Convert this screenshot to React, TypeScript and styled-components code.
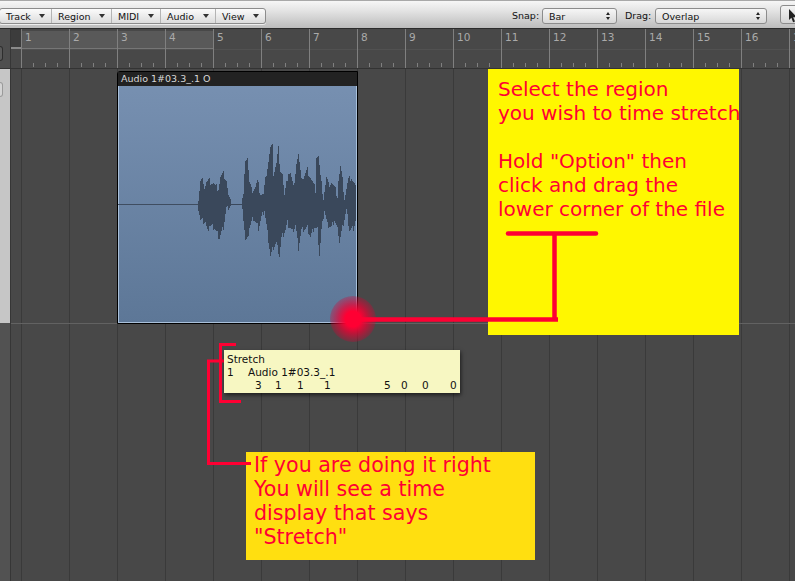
import styled, { createGlobalStyle } from "styled-components";

const GlobalStyle = createGlobalStyle`
  html, body {
    margin: 0;
    padding: 0;
    background: #484848;
  }
`;

const Page = styled.div`
  position: relative;
  width: 795px;
  height: 581px;
  overflow: hidden;
  font-family: "DejaVu Sans", sans-serif;
`;

const Toolbar = styled.div`
  box-sizing: border-box;
  height: 29px;
  padding-top: 8px;
  display: flex;
  align-items: flex-start;
  border-top: 1px solid #a8a8a8;
  border-bottom: 1px solid #2c2c2c;
  background: linear-gradient(#f6f6f6 0%, #e4e4e4 35%, #bcbcbc 100%);
`;

const MenuGroup = styled.div`
  display: flex;
  flex: none;
  height: 14px;
  margin-left: -1px;
  margin-top: -1px;
  border: 1px solid #8c8c8c;
  border-radius: 3px;
  background: linear-gradient(#fbfbfb, #dcdcdc);
  box-shadow: 0 1px 0 #eeeeee;
`;

const MenuItem = styled.div<{ $w: number }>`
  box-sizing: border-box;
  width: ${(p) => p.$w}px;
  padding: 0 6px 0 6px;
  display: flex;
  align-items: center;
  justify-content: space-between;
  font-size: 9.5px;
  color: #111;
  border-right: 1px solid #b4b4b4;
  &:last-child {
    border-right: none;
  }
`;

const DownCaret = styled.span`
  width: 0;
  height: 0;
  border-left: 3px solid transparent;
  border-right: 3px solid transparent;
  border-top: 4px solid #333;
`;

const SnapLabel = styled.span<{ $left: number }>`
  flex: none;
  width: 26px;
  margin-left: ${(p) => p.$left}px;
  font-size: 9.5px;
  line-height: 16px;
  margin-top: -1px;
  color: #111;
`;

const SelectBox = styled.div<{ $w: number }>`
  box-sizing: border-box;
  flex: none;
  width: ${(p) => p.$w}px;
  height: 16px;
  margin-top: -1px;
  margin-left: 4px;
  padding: 0 6px;
  display: flex;
  align-items: center;
  justify-content: space-between;
  font-size: 9.5px;
  color: #111;
  border: 1px solid #8c8c8c;
  border-radius: 3px;
  background: linear-gradient(#f6f6f6, #d8d8d8);
`;

const Stepper = styled.span`
  display: flex;
  flex-direction: column;
  gap: 2px;
  &::before {
    content: "";
    border-left: 2px solid transparent;
    border-right: 2px solid transparent;
    border-bottom: 3px solid #222;
  }
  &::after {
    content: "";
    border-left: 2px solid transparent;
    border-right: 2px solid transparent;
    border-top: 3px solid #222;
  }
`;

const ToolButton = styled.div`
  box-sizing: border-box;
  flex: none;
  width: 30px;
  height: 19px;
  margin-left: 13px;
  margin-top: -4px;
  padding: 2px 0 0 7px;
  border: 1px solid #8c8c8c;
  border-radius: 3px;
  background: linear-gradient(#f4f4f4, #d4d4d4);
`;

const RulerRow = styled.div`
  display: flex;
  height: 39px;
  background: #484848;
  border-bottom: 1px solid #333;
`;

const LeftStrip = styled.div`
  box-sizing: border-box;
  width: 11px;
  flex: none;
  padding-top: 17px;
  background: #4e4e4e;
  border-right: 1px solid #363636;
`;

const StripButton = styled.div<{ $light?: boolean }>`
  box-sizing: border-box;
  width: 3px;
  height: 15px;
  border: 1px solid ${(p) => (p.$light ? "#9a9a9a" : "#2e2e2e")};
  border-left: none;
  border-radius: 0 3px 3px 0;
  background: ${(p) => (p.$light ? "#d4d4d4" : "#5a5a5a")};
`;

const RulerCorner = styled.div`
  box-sizing: border-box;
  width: 10px;
  height: 20px;
  margin-top: 0;
  flex: none;
  background: #3c3c3c;
  border-top: 1px solid #333;
  border-bottom: 2px solid #8a8a8a;
`;

const RulerBars = styled.div`
  position: relative;
  display: flex;
  flex: 1;
`;

const CycleRegion = styled.div`
  position: absolute;
  left: 0;
  top: 2px;
  width: 192px;
  height: 17px;
  background: #595959;
  border-bottom: 1px solid #767676;
  border-right: 1px solid #8c8c8c;
`;

const MidLine = styled.div`
  position: absolute;
  left: 0;
  right: 0;
  top: 20px;
  height: 1px;
  background: #515151;
`;

const Bar = styled.div`
  position: relative;
  box-sizing: border-box;
  width: 48px;
  flex: none;
  padding: 1px 0 0 3px;
  font-size: 10.5px;
  line-height: 14px;
  color: #aaaaaa;
  border-left: 1px solid #808080;
  height: 39px;
  background:
    linear-gradient(#808080, #808080) 11px 34px / 1px 4px no-repeat,
    linear-gradient(#808080, #808080) 23px 34px / 1px 4px no-repeat,
    linear-gradient(#808080, #808080) 35px 34px / 1px 4px no-repeat;
`;

const Arrange = styled.div`
  position: relative;
  display: flex;
  height: 512px;
`;

const Tracks = styled.div`
  flex: 1;
  display: flex;
  flex-direction: column;
`;

const TrackLane = styled.div<{ $h: number }>`
  height: ${(p) => p.$h}px;
  flex: none;
  background-color: #484848;
  background-image: repeating-linear-gradient(
    90deg,
    #3a3a3a 0,
    #3a3a3a 1px,
    transparent 1px,
    transparent 48px
  );
  background-position: 10px 0;
`;

const LaneDivider = styled.div`
  height: 1px;
  flex: none;
  background: #626262;
`;

const StripColumn = styled.div`
  width: 11px;
  flex: none;
  display: flex;
  flex-direction: column;
`;

const StripPart = styled.div<{ $h: number; $bg: string }>`
  box-sizing: border-box;
  height: ${(p) => p.$h}px;
  flex: none;
  padding-top: 13px;
  background: ${(p) => p.$bg};
  border-right: 1px solid #363636;
`;

const Region = styled.div`
  position: absolute;
  left: 117px;
  top: 2px;
  box-sizing: border-box;
  width: 241px;
  height: 253px;
  border: 1px solid #000;
  border-top-left-radius: 3px;
  box-shadow: inset 0 0 0 1px #a9c0da;
  background: linear-gradient(#7891b2, #5d7797);
  display: flex;
  flex-direction: column;
`;

const RegionHeader = styled.div`
  height: 14px;
  flex: none;
  padding-left: 3px;
  background: #222;
  color: #d8d8d8;
  font-size: 9.5px;
  line-height: 14px;
`;

const Wave = styled.svg`
  display: block;
  flex: 1;
`;

const Sticky = styled.div<{
  $left: number;
  $top: number;
  $w: number;
  $h: number;
  $bg: string;
  $pad: string;
  $size: number;
}>`
  position: absolute;
  left: ${(p) => p.$left}px;
  top: ${(p) => p.$top}px;
  width: ${(p) => p.$w}px;
  height: ${(p) => p.$h}px;
  box-sizing: border-box;
  padding: ${(p) => p.$pad};
  background: ${(p) => p.$bg};
  color: #ff0033;
  font-size: ${(p) => p.$size}px;
  line-height: 24px;
  white-space: pre;
  overflow: hidden;
`;

const Glow = styled.div`
  position: absolute;
  left: 330px;
  top: 296px;
  width: 46px;
  height: 46px;
  border-radius: 50%;
  background: radial-gradient(
    circle,
    #ff0033 0%,
    #ff0033 24%,
    rgba(235, 0, 50, 0.7) 45%,
    rgba(210, 0, 50, 0.28) 70%,
    rgba(200, 0, 50, 0) 100%
  );
`;

const Connectors = styled.svg`
  position: absolute;
  left: 0;
  top: 0;
  pointer-events: none;
`;

const Tip = styled.div`
  position: absolute;
  left: 224px;
  top: 350px;
  box-sizing: border-box;
  width: 236px;
  height: 43px;
  padding: 3px 3px 0;
  background: #f7f7c2;
  box-shadow: 1px 2px 4px rgba(0, 0, 0, 0.6);
  color: #111;
  font-size: 10.5px;
  line-height: 13px;
`;

const TipRow = styled.div`
  position: relative;
  height: 13px;
`;

const TipCell = styled.span<{ $x: number }>`
  position: absolute;
  left: ${(p) => p.$x}px;
`;

// envelope read off the reference, pairs of x / y in region coordinates
const upper: [number, number][] = [
  [80, 70], [82, 52], [85, 51], [86, 57], [88, 52], [91, 51], [95, 53], [97, 57], [100, 58], [102, 47],
  [105, 44], [108, 50], [110, 66], [112, 72], [123, 72], [125, 66], [127, 28], [129, 27], [131, 53],
  [133, 60], [137, 57], [139, 52], [142, 63], [145, 65], [148, 43], [152, 18], [154, 17], [155, 43],
  [158, 33], [160, 18], [161, 37], [164, 43], [166, 66], [170, 42], [172, 43], [175, 58], [178, 33],
  [180, 25], [182, 43], [185, 48], [189, 40], [192, 47], [197, 60], [198, 26], [200, 26], [202, 47],
  [205, 68], [208, 48], [210, 55], [213, 52], [217, 60], [219, 66], [220, 50], [222, 37], [224, 50],
  [226, 68], [230, 50], [233, 47], [237, 57], [238, 60],
];
const lower: [number, number][] = [
  [80, 78], [82, 90], [87, 92], [89, 102], [91, 95], [96, 98], [101, 108], [105, 97], [108, 78], [112, 76],
  [123, 76], [125, 88], [127, 110], [129, 110], [131, 97], [135, 88], [140, 98], [143, 87], [146, 80],
  [150, 110], [152, 126], [155, 117], [158, 113], [161, 126], [163, 108], [167, 100], [169, 93], [174, 102],
  [177, 95], [180, 118], [183, 100], [189, 98], [192, 107], [196, 97], [199, 100], [201, 125], [203, 100],
  [206, 80], [209, 95], [213, 97], [216, 90], [220, 103], [221, 112], [225, 93], [228, 80], [231, 100],
  [235, 98], [238, 88],
];

const interp = (pts: [number, number][], x: number) => {
  for (let i = 0; i < pts.length - 1; i++) {
    if (x >= pts[i][0] && x <= pts[i + 1][0]) {
      const t = (x - pts[i][0]) / (pts[i + 1][0] - pts[i][0] || 1);
      return pts[i][1] + t * (pts[i + 1][1] - pts[i][1]);
    }
  }
  return 74;
};

const wavePath = () => {
  let d = "";
  for (let x = 80; x < 238; x++) {
    const a = ((x * 13) % 7) - 3;
    const b = ((x * 11) % 5) - 2;
    const quiet = x > 112 && x < 124;
    const top = quiet ? 73.5 : Math.min(interp(upper, x) + a * 1.1, 72);
    const bottom = quiet ? 74.5 : Math.max(interp(lower, x) - b * 1.4, 76);
    d += `M${x} ${Math.round(top)}V${Math.round(bottom)}`;
  }
  return d;
};

const bars = Array.from({ length: 17 }, (_, i) => i + 1);

function App() {
  return (
    <Page>
      <GlobalStyle />
      <Toolbar>
        <MenuGroup>
          {[
            ["Track", 52],
            ["Region", 60],
            ["MIDI", 49],
            ["Audio", 55],
            ["View", 49],
          ].map(([label, w]) => (
            <MenuItem key={label} $w={w as number}>
              {label}
              <DownCaret />
            </MenuItem>
          ))}
        </MenuGroup>
        <SnapLabel $left={246}>Snap:</SnapLabel>
        <SelectBox $w={75}>
          Bar
          <Stepper />
        </SelectBox>
        <SnapLabel $left={8}>Drag:</SnapLabel>
        <SelectBox $w={112}>
          Overlap
          <Stepper />
        </SelectBox>
        <ToolButton>
          <svg width="10" height="14" viewBox="0 0 10 14">
            <path d="M1 0v11l2.400-2.200 1.700 4.400 1.900-.8-1.800-4.200H9z" fill="#222" />
          </svg>
        </ToolButton>
      </Toolbar>
      <RulerRow>
        <LeftStrip>
          <StripButton />
        </LeftStrip>
        <RulerCorner />
        <RulerBars>
          <CycleRegion />
          <MidLine />
          {bars.map((n) => (
            <Bar key={n}>{n}</Bar>
          ))}
        </RulerBars>
      </RulerRow>
      <Arrange>
        <StripColumn>
          <StripPart $h={254} $bg="#c6c6c6">
            <StripButton $light />
          </StripPart>
          <StripPart $h={258} $bg="#525252" />
        </StripColumn>
        <Tracks>
          <TrackLane $h={254} />
          <LaneDivider />
          <TrackLane $h={257} />
        </Tracks>
        <Region>
          <RegionHeader>Audio 1#03.3_.1 O</RegionHeader>
          <Wave viewBox="0 0 239 237" width="239" height="237" shapeRendering="crispEdges">
            <path d="M0 118.500H80" stroke="#3f4d60" strokeWidth="1" />
            <g transform="translate(0 44)">
              <path d={wavePath()} stroke="#3a485b" strokeWidth="1" fill="none" />
            </g>
          </Wave>
        </Region>
      </Arrange>

      <Sticky $left={488} $top={69} $w={251} $h={266} $bg="#fff700" $pad="8px 0 0 10px" $size={20}>
        {'Select the region\nyou wish to time stretch\n\nHold "Option" then\nclick and drag the\nlower corner of the file'}
      </Sticky>
      <Sticky $left={246} $top={452} $w={289} $h={108} $bg="#ffdf10" $pad="1px 0 0 8px" $size={20.6}>
        {'If you are doing it right\nYou will see a time\ndisplay that says\n"Stretch"'}
      </Sticky>

      <Glow />
      <Connectors width="795" height="581" fill="none" stroke="#ff0033" strokeWidth="3">
        <path d="M357 319.500H558" strokeWidth="4.500" />
        <path d="M554.500 233V320" strokeWidth="4.500" />
        <path d="M508 233.500H596" strokeWidth="4.500" strokeLinecap="round" />
        <path d="M236 344.500H220.500V401.500H241" />
        <path d="M251 463.500H208.500V361H224" />
      </Connectors>
      <Tip>
        <TipRow>Stretch</TipRow>
        <TipRow>
          <TipCell $x={0}>1</TipCell>
          <TipCell $x={21}>Audio 1#03.3_.1</TipCell>
        </TipRow>
        <TipRow>
          <TipCell $x={28}>3</TipCell>
          <TipCell $x={48}>1</TipCell>
          <TipCell $x={70}>1</TipCell>
          <TipCell $x={97}>1</TipCell>
          <TipCell $x={157}>5</TipCell>
          <TipCell $x={174}>0</TipCell>
          <TipCell $x={195}>0</TipCell>
          <TipCell $x={223}>0</TipCell>
        </TipRow>
      </Tip>
    </Page>
  );
}

export default App;
